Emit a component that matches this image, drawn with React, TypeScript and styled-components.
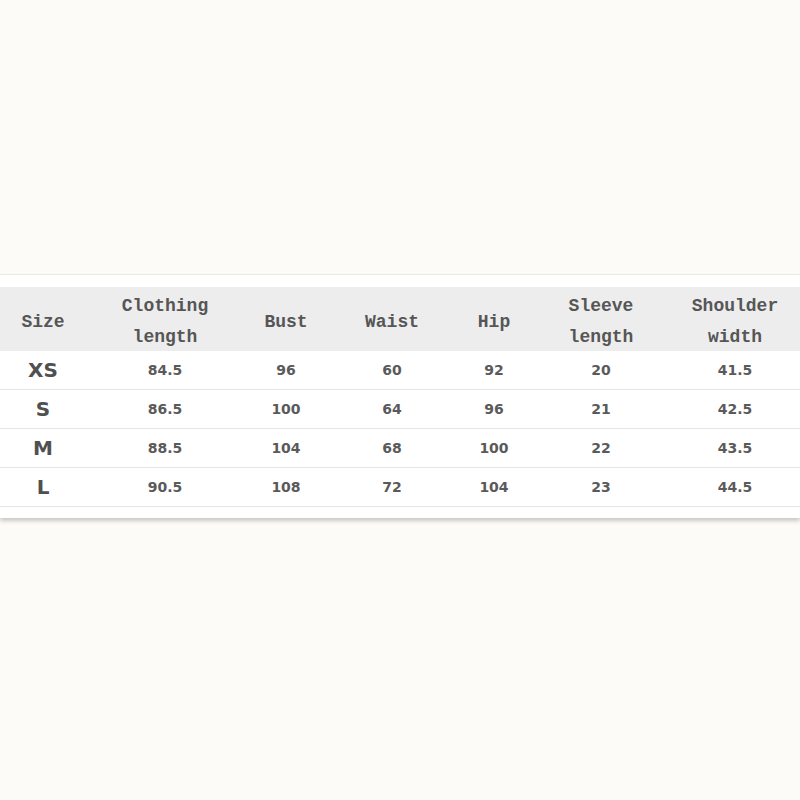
import React from 'react';
import styled, { createGlobalStyle } from 'styled-components';

const GlobalStyle = createGlobalStyle`
    html, body {
        margin: 0;
        padding: 0;
        background: #fcfbf8;
    }
`;

const Page = styled.div`
    width: 800px;
    height: 800px;
    padding-top: 274px;
    box-sizing: border-box;
    background: #fcfbf8;
`;

const Sheet = styled.div`
    background: #ffffff;
    border-top: 1px solid #ebe9e4;
    padding: 12px 0 11px;
    box-shadow: 0 3px 4px rgb(0 0 0 / 20%);
`;

const COLUMNS = '86px 158px 84px 128px 76px 138px 130px';

const HeaderRow = styled.div`
    display: grid;
    grid-template-columns: ${COLUMNS};
    height: 64px;
    box-sizing: border-box;
    padding-top: 4px;
    align-items: center;
    background: #ededed;
`;

const HeaderCell = styled.div`
    text-align: center;
    font-family: 'Liberation Mono', 'DejaVu Sans Mono', monospace;
    font-weight: bold;
    font-size: 18px;
    line-height: 31px;
    color: #565656;
`;

const Row = styled.div`
    display: grid;
    grid-template-columns: ${COLUMNS};
    height: 38px;
    align-items: center;
    border-bottom: 1px solid #e6e6e6;
`;

const SizeCell = styled.div`
    text-align: center;
    font-family: 'DejaVu Sans', Verdana, sans-serif;
    font-weight: bold;
    font-size: 20px;
    color: #505050;
`;

const ValueCell = styled.div`
    text-align: center;
    font-family: 'DejaVu Sans', Verdana, sans-serif;
    font-weight: bold;
    font-size: 14px;
    color: #5a5a5a;
`;

const headers: string[][] = [
    ['Size'],
    ['Clothing', 'length'],
    ['Bust'],
    ['Waist'],
    ['Hip'],
    ['Sleeve', 'length'],
    ['Shoulder', 'width'],
];

const rows: (string | number)[][] = [
    ['XS', '84.5', 96, 60, 92, 20, '41.5'],
    ['S', '86.5', 100, 64, 96, 21, '42.5'],
    ['M', '88.5', 104, 68, 100, 22, '43.5'],
    ['L', '90.5', 108, 72, 104, 23, '44.5'],
];

const App = () => {
    return (
        <>
            <GlobalStyle />
            <Page>
                <Sheet>
                    <HeaderRow>
                        {headers.map((lines) => (
                            <HeaderCell key={lines.join(' ')}>
                                {lines.map((line) => (
                                    <div key={line}>{line}</div>
                                ))}
                            </HeaderCell>
                        ))}
                    </HeaderRow>
                    {rows.map((row) => (
                        <Row key={row[0]}>
                            <SizeCell>{row[0]}</SizeCell>
                            {row.slice(1).map((value, i) => (
                                <ValueCell key={i}>{value}</ValueCell>
                            ))}
                        </Row>
                    ))}
                </Sheet>
            </Page>
        </>
    );
};

export default App;
